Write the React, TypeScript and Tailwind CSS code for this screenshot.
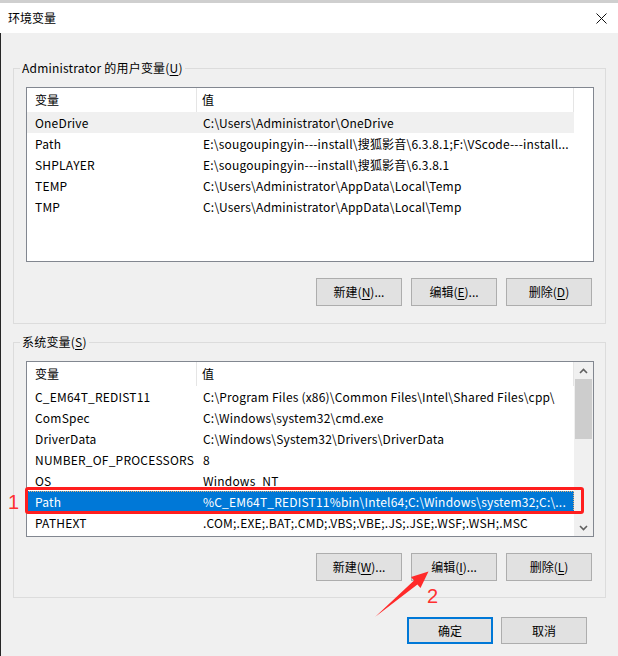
import React from "react";

type Row = { name: string; value: string };

const userRows: Row[] = [
  { name: "OneDrive", value: "C:\\Users\\Administrator\\OneDrive" },
  { name: "Path", value: "E:\\sougoupingyin---install\\搜狐影音\\6.3.8.1;F:\\VScode---install..." },
  { name: "SHPLAYER", value: "E:\\sougoupingyin---install\\搜狐影音\\6.3.8.1" },
  { name: "TEMP", value: "C:\\Users\\Administrator\\AppData\\Local\\Temp" },
  { name: "TMP", value: "C:\\Users\\Administrator\\AppData\\Local\\Temp" },
];

const sysRows: Row[] = [
  { name: "C_EM64T_REDIST11", value: "C:\\Program Files (x86)\\Common Files\\Intel\\Shared Files\\cpp\\" },
  { name: "ComSpec", value: "C:\\Windows\\system32\\cmd.exe" },
  { name: "DriverData", value: "C:\\Windows\\System32\\Drivers\\DriverData" },
  { name: "NUMBER_OF_PROCESSORS", value: "8" },
  { name: "OS", value: "Windows_NT" },
  { name: "Path", value: "%C_EM64T_REDIST11%bin\\Intel64;C:\\Windows\\system32;C:\\..." },
  { name: "PATHEXT", value: ".COM;.EXE;.BAT;.CMD;.VBS;.VBE;.JS;.JSE;.WSF;.WSH;.MSC" },
];

const Mn = ({ c }: { c: string }) => <u className="underline-offset-[2px]">{c}</u>;

const Btn = ({ children }: { children: React.ReactNode }) => (
  <div className="w-[86px] h-[28px] bg-[#e1e1e1] border border-[#adadad] flex items-center justify-center text-[12px] text-black">
    {children}
  </div>
);

const Scrollbar = () => (
  <div className="w-[19px] bg-[#f0f0f0] flex flex-col items-center">
    <div className="h-[17px] w-full flex items-center justify-center">
      <svg width="9" height="6" viewBox="0 0 9 6">
        <polyline points="1,5 4.5,1.5 8,5" fill="none" stroke="#606060" strokeWidth="1.6" />
      </svg>
    </div>
    <div className="h-[60px] w-[17px] bg-[#cdcdcd]" />
    <div className="mt-auto h-[17px] w-full flex items-center justify-center">
      <svg width="9" height="6" viewBox="0 0 9 6">
        <polyline points="1,1 4.5,4.5 8,1" fill="none" stroke="#606060" strokeWidth="1.6" />
      </svg>
    </div>
  </div>
);

function ListView({
  rows,
  hover,
  selected,
  scroll,
  height,
}: {
  rows: Row[];
  hover?: number;
  selected?: number;
  scroll?: boolean;
  height: string;
}) {
  return (
    <div className={`ml-[12px] w-[568px] ${height} border border-[#828790] bg-white flex overflow-hidden`}>
      <div className="w-[547px] flex flex-col">
        <div className="h-[24px] flex shrink-0 text-[12px]">
          <div className="w-[170px] border-r border-[#e5e5e5] pl-2 flex items-center">变量</div>
          <div className="w-[377px] border-r border-[#e5e5e5] pl-[5px] flex items-center">值</div>
        </div>
        {rows.map((r, i) => {
          const sel = i === selected;
          const hov = i === hover;
          return (
            <div
              key={i}
              className={
                "h-[21px] flex shrink-0 items-center text-[12px] tracking-[0.2px] whitespace-nowrap " +
                (sel
                  ? "bg-[#0078d7] text-white outline outline-1 outline-dotted outline-[#e9b070] -outline-offset-1"
                  : hov
                  ? "bg-[#f0f0f0] text-black"
                  : "text-black")
              }
            >
              <div className="w-[170px] pl-2 overflow-hidden">{r.name}</div>
              <div className="w-[377px] pl-[6px] overflow-hidden">{r.value}</div>
            </div>
          );
        })}
      </div>
      {scroll ? <Scrollbar /> : <div className="flex-1" />}
    </div>
  );
}

export default function App() {
  return (
    <div className="relative w-[618px] h-[656px] bg-[#f0f0f0] overflow-hidden font-['Microsoft_YaHei_UI','Noto_Sans_CJK_SC',sans-serif] text-black">
      <div className="h-[3px] bg-[#cfcfcf]" />
      <div className="h-[30px] bg-white flex items-center justify-between pl-[8px] pr-[11px]">
        <span className="text-[12px]">环境变量</span>
        <svg width="11" height="11" viewBox="0 0 11 11">
          <line x1="0.5" y1="0.5" x2="10.5" y2="10.5" stroke="#111" strokeWidth="1" />
          <line x1="10.5" y1="0.5" x2="0.5" y2="10.5" stroke="#111" strokeWidth="1" />
        </svg>
      </div>

      <div className="h-[623px] border-l border-[#262626] flex flex-col">
        <fieldset className="mt-[27px] ml-[12px] w-[593px] min-w-0 border border-[#dcdcdc] pb-[17px]">
          <legend className="ml-[6px] px-[2px] text-[12px] leading-[16px] tracking-[0.2px]">
            Administrator 的用户变量(<Mn c="U" />)
          </legend>
          <div className="mt-[11px]">
            <ListView rows={userRows} hover={0} height="h-[175px]" />
          </div>
          <div className="mt-[16px] mr-[13px] flex justify-end gap-[9px]">
            <Btn>新建(<Mn c="N" />)...</Btn>
            <Btn>编辑(<Mn c="E" />)...</Btn>
            <Btn>删除(<Mn c="D" />)</Btn>
          </div>
        </fieldset>

        <fieldset className="mt-[10px] ml-[12px] w-[593px] min-w-0 border border-[#dcdcdc] pb-[16px]">
          <legend className="ml-[6px] px-[2px] text-[12px] leading-[16px] tracking-[0.2px]">
            系统变量(<Mn c="S" />)
          </legend>
          <div className="mt-[11px]">
            <ListView rows={sysRows} selected={5} scroll height="h-[176px]" />
          </div>
          <div className="mt-[16px] mr-[13px] flex justify-end gap-[9px]">
            <Btn>新建(<Mn c="W" />)...</Btn>
            <Btn>编辑(<Mn c="I" />)...</Btn>
            <Btn>删除(<Mn c="L" />)</Btn>
          </div>
        </fieldset>

        <div className="mt-[19px] mr-[31px] flex justify-end gap-[8px]">
          <div className="w-[86px] h-[27px] bg-[#e1e1e1] border-2 border-[#0078d7] flex items-center justify-center text-[12px]">
            确定
          </div>
          <div className="w-[86px] h-[27px] bg-[#e1e1e1] border border-[#adadad] flex items-center justify-center text-[12px]">
            取消
          </div>
        </div>
      </div>

      {/* annotations */}
      <div className="absolute left-[25px] top-[487px] w-[559px] h-[27px] border-[3px] border-[#ff1e1e] rounded-[3px]" />
      <div className="absolute left-[8px] top-[490px] text-[20px] leading-[24px] text-[#ff3030] font-['Liberation_Sans',sans-serif]">1</div>
      <div className="absolute left-[427px] top-[584px] text-[20px] leading-[24px] text-[#ff3030] font-['Liberation_Sans',sans-serif]">2</div>
      <svg className="absolute left-0 top-0" width="618" height="656" viewBox="0 0 618 656">
        <polygon
          points="375,617 414,580.6 411,577 428.5,571.5 420.5,588 417.4,584.4"
          fill="#ff2a2a"
        />
      </svg>
    </div>
  );
}
